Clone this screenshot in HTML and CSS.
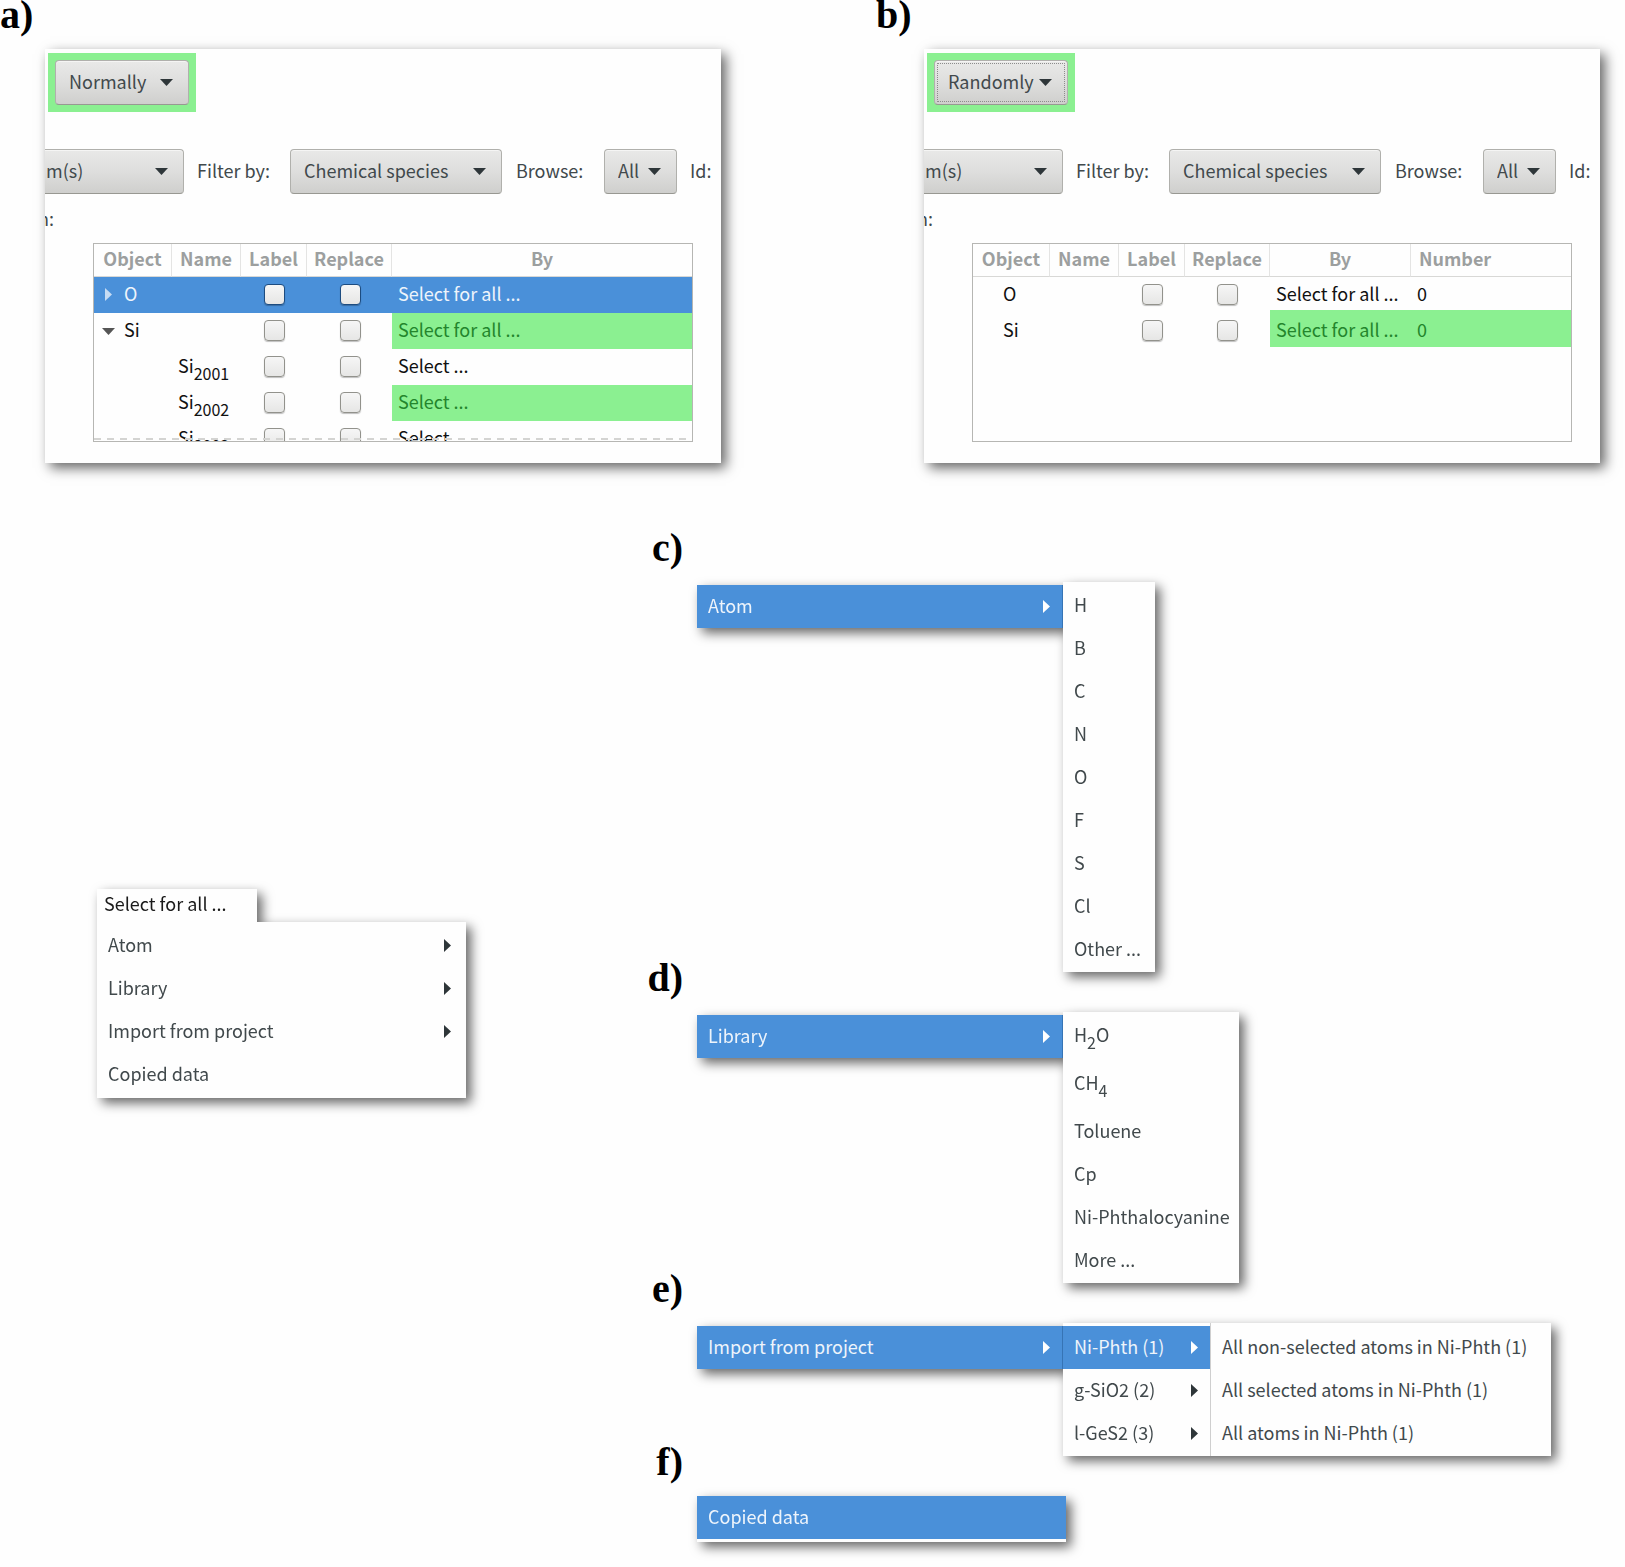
FILE: index.html
```html
<!DOCTYPE html>
<html lang="en">
<head>
<meta charset="utf-8">
<title>Replacement options</title>
<link rel="stylesheet" href="styles.css">
</head>
<body>
<svg class="defs" aria-hidden="true">
  <symbol id="down" viewBox="0 0 13 7"><path d="M0 0h13L6.500 7z" fill="currentColor"/></symbol>
  <symbol id="right" viewBox="0 0 7 13"><path d="M0 0v13L7 6.500z" fill="currentColor"/></symbol>
</svg>
<main>
  <div class="panels">
    <section class="figure">
      <h2>a)</h2>
      <div class="panel">
        <div class="highlight">
          <span class="combo mode"><select aria-label="Replacement mode"><option>Normally</option></select><svg class="down"><use href="#down"/></svg></span>
        </div>
        <div class="toolbar">
          <span class="combo cut"><select aria-label="Object type"><option>m(s)</option></select><svg class="down"><use href="#down"/></svg></span>
          <label class="filter" for="filter-a">Filter by:</label>
          <span class="combo species"><select id="filter-a"><option>Chemical species</option></select><svg class="down"><use href="#down"/></svg></span>
          <label class="browse" for="browse-a">Browse:</label>
          <span class="combo all"><select id="browse-a"><option>All</option></select><svg class="down"><use href="#down"/></svg></span>
          <span class="id">Id:</span>
        </div>
        <p class="caption">n:</p>
        <div class="tree more">
          <table>
            <colgroup><col class="c-object"><col class="c-name"><col class="c-label"><col class="c-replace"><col></colgroup>
            <thead><tr><th>Object</th><th>Name</th><th>Label</th><th>Replace</th><th>By</th></tr></thead>
            <tbody>
              <tr class="selected"><td class="node"><svg class="right"><use href="#right"/></svg>O</td><td></td><td class="tick"><input type="checkbox" aria-label="Label O"></td><td class="tick"><input type="checkbox" aria-label="Replace O"></td><td>Select for all ...</td></tr>
              <tr><td class="node open"><svg class="down"><use href="#down"/></svg>Si</td><td></td><td class="tick"><input type="checkbox" aria-label="Label Si"></td><td class="tick"><input type="checkbox" aria-label="Replace Si"></td><td class="green">Select for all ...</td></tr>
              <tr><td></td><td>Si<sub>2001</sub></td><td class="tick"><input type="checkbox" aria-label="Label Si 2001"></td><td class="tick"><input type="checkbox" aria-label="Replace Si 2001"></td><td>Select ...</td></tr>
              <tr><td></td><td>Si<sub>2002</sub></td><td class="tick"><input type="checkbox" aria-label="Label Si 2002"></td><td class="tick"><input type="checkbox" aria-label="Replace Si 2002"></td><td class="green">Select ...</td></tr>
              <tr><td></td><td>Si<sub>2003</sub></td><td class="tick"><input type="checkbox" aria-label="Label Si 2003"></td><td class="tick"><input type="checkbox" aria-label="Replace Si 2003"></td><td>Select ...</td></tr>
            </tbody>
          </table>
        </div>
      </div>
    </section>

    <section class="figure second">
      <h2>b)</h2>
      <div class="panel">
        <div class="highlight">
          <span class="combo mode focused"><select aria-label="Replacement mode"><option>Randomly</option></select><svg class="down"><use href="#down"/></svg></span>
        </div>
        <div class="toolbar">
          <span class="combo cut"><select aria-label="Object type"><option>m(s)</option></select><svg class="down"><use href="#down"/></svg></span>
          <label class="filter" for="filter-b">Filter by:</label>
          <span class="combo species"><select id="filter-b"><option>Chemical species</option></select><svg class="down"><use href="#down"/></svg></span>
          <label class="browse" for="browse-b">Browse:</label>
          <span class="combo all"><select id="browse-b"><option>All</option></select><svg class="down"><use href="#down"/></svg></span>
          <span class="id">Id:</span>
        </div>
        <p class="caption">n:</p>
        <div class="tree flat">
          <table>
            <colgroup><col class="c-object"><col class="c-name"><col class="c-label"><col class="c-replace"><col class="c-by"><col></colgroup>
            <thead><tr><th>Object</th><th>Name</th><th>Label</th><th>Replace</th><th>By</th><th class="number">Number</th></tr></thead>
            <tbody>
              <tr><td class="leaf">O</td><td></td><td class="tick"><input type="checkbox" aria-label="Label O"></td><td class="tick"><input type="checkbox" aria-label="Replace O"></td><td>Select for all ...</td><td>0</td></tr>
              <tr><td class="leaf">Si</td><td></td><td class="tick"><input type="checkbox" aria-label="Label Si"></td><td class="tick"><input type="checkbox" aria-label="Replace Si"></td><td class="green">Select for all ...</td><td class="green">0</td></tr>
            </tbody>
          </table>
        </div>
      </div>
    </section>
  </div>

  <div class="menus">
    <div class="popup">
      <p class="tab">Select for all ...</p>
      <div class="menu root">
        <button>Atom<svg class="right"><use href="#right"/></svg></button>
        <button>Library<svg class="right"><use href="#right"/></svg></button>
        <button>Import from project<svg class="right"><use href="#right"/></svg></button>
        <button>Copied data</button>
      </div>
    </div>

    <div class="steps">
      <section class="step">
        <h2>c)</h2>
        <div class="cascade">
          <div class="bar"><button class="active">Atom<svg class="right"><use href="#right"/></svg></button></div>
          <div class="menu atoms">
            <button>H</button><button>B</button><button>C</button><button>N</button><button>O</button><button>F</button><button>S</button><button>Cl</button><button>Other ...</button>
          </div>
        </div>
      </section>
      <section class="step">
        <h2>d)</h2>
        <div class="cascade">
          <div class="bar"><button class="active">Library<svg class="right"><use href="#right"/></svg></button></div>
          <div class="menu library">
            <button class="tall"><span>H<sub>2</sub>O</span></button><button class="tall"><span>CH<sub>4</sub></span></button><button>Toluene</button><button>Cp</button><button>Ni-Phthalocyanine</button><button>More ...</button>
          </div>
        </div>
      </section>
      <section class="step">
        <h2>e)</h2>
        <div class="cascade">
          <div class="bar"><button class="active">Import from project<svg class="right"><use href="#right"/></svg></button></div>
          <div class="menu projects">
            <button class="active">Ni-Phth (1)<svg class="right"><use href="#right"/></svg></button>
            <button>g-SiO2 (2)<svg class="right"><use href="#right"/></svg></button>
            <button>l-GeS2 (3)<svg class="right"><use href="#right"/></svg></button>
          </div>
          <div class="menu scope">
            <button>All non-selected atoms in Ni-Phth (1)</button>
            <button>All selected atoms in Ni-Phth (1)</button>
            <button>All atoms in Ni-Phth (1)</button>
          </div>
        </div>
      </section>
      <section class="step">
        <h2>f)</h2>
        <div class="cascade">
          <div class="bar last"><button class="active">Copied data</button></div>
        </div>
      </section>
    </div>
  </div>
</main>
</body>
</html>
```
FILE: styles.css
```css
* { box-sizing: border-box; }

body {
  margin: 0;
  background: #fefefe;
  color: #41494c;
  font: 18px/24px "Noto Sans CJK SC", "Open Sans", sans-serif;
}

.defs { display: none; }

h2 {
  margin: 0;
  color: #000;
  font: bold 40px/29px "Liberation Serif", serif;
}

p { margin: 0; }

svg { flex: none; fill: currentColor; }
svg.down { width: 13px; height: 7px; }
svg.right { width: 7px; height: 13px; }

/* Option panels */
.panels {
  display: grid;
  grid-template-columns: 876fr 749fr;
}

.panel {
  max-width: 676px;
  margin: 20px 0 0 45px;
  padding: 4px 0 21px;
  overflow: hidden;
  background: #fefefe;
  box-shadow: 5px 5px 12px rgba(0, 0, 0, 0.6);
}

.second .panel { margin-left: 48px; }

.highlight {
  width: fit-content;
  margin-left: 3px;
  padding: 7px;
  background: #8bf091;
}

.combo {
  position: relative;
  display: flex;
  flex: none;
}

.combo select {
  width: 100%;
  height: 45px;
  padding: 0 0 4px 13px;
  appearance: none;
  border: 1px solid #b0b0ac;
  border-bottom-color: #989892;
  border-radius: 4px;
  background: linear-gradient(#e9e9e8, #dededd 50%, #cfcfcd);
  box-shadow: inset 0 1px #f5f5f4;
  color: inherit;
  font: inherit;
}

.combo .down {
  position: absolute;
  right: 16px;
  top: 19px;
  color: #2e3639;
  pointer-events: none;
}

.mode { width: 134px; }
.focused select { outline: 1px dotted #8c8c8c; outline-offset: -4px; }
.cut { width: 145px; margin-left: -6px; }
.combo.cut select { padding-left: 6px; }
.species { width: 212px; }
.all { width: 73px; }

.toolbar {
  display: flex;
  align-items: center;
  margin-top: 37px;
  white-space: nowrap;
}

.filter { width: 106px; padding: 0 0 3px 13px; }
.browse { width: 102px; padding: 0 0 3px 14px; }
.id { padding: 0 0 3px 13px; }

.caption { margin: 12px 0 13px -7px; }

/* Object lists */
.tree {
  position: relative;
  height: 199px;
  margin: 0 28px 0 48px;
  overflow: hidden;
  border: 1px solid #b6b6b3;
}

.more::after {
  content: "";
  position: absolute;
  inset: auto 0 1px;
  height: 2px;
  background: repeating-linear-gradient(90deg, #d4d4d2 0 7px, transparent 7px 13px);
}

table {
  width: 100%;
  table-layout: fixed;
  border-collapse: separate;
  border-spacing: 0;
  color: #111;
  white-space: nowrap;
}

.c-object { width: 78px; }
.flat .c-object { width: 77px; }
.c-name { width: 69px; }
.c-label { width: 66px; }
.c-replace { width: 85px; }
.c-by { width: 141px; }

th {
  height: 33px;
  padding: 0 0 4px;
  border-right: 1px solid #e4e4e3;
  border-bottom: 1px solid #d8d8d6;
  color: #9c9f9f;
  font-weight: bold;
}

th:last-child { border-right: 0; }
.number { padding-left: 8px; text-align: left; }

td { height: 36px; padding: 0 0 4px 6px; }

.flat td { height: 33px; padding-bottom: 2px; }
.flat tr:last-child td { height: 37px; padding-bottom: 0; }
.flat td.tick { padding: 2px 0 0; }
.flat tr:last-child td.tick { padding-top: 4px; }

td.node { padding-left: 11px; }
.node svg { margin-right: 12px; color: #555; }
td.open { padding-left: 8px; }
.open svg { margin-right: 9px; vertical-align: 2px; }
.flat .leaf { padding-left: 30px; }

.selected { background: #4a90d9; color: #eef4fb; }
.selected svg { color: #c5dbf3; }
.green { background: #8bf091; color: #23852c; }

td.tick { padding: 0 0 2px 1px; }

.tick input {
  display: block;
  width: 21px;
  height: 21px;
  margin: 0 auto;
  appearance: none;
  border: 1px solid #92928c;
  border-radius: 4px;
  background: linear-gradient(#f6f6f6, #e6e6e5);
  box-shadow: 0 1px 1px rgba(0, 0, 0, 0.25);
}

.selected input { border-color: #1d4c80; }

sub { font-size: 16px; line-height: 0; vertical-align: -7px; }

/* Menus */
.menus {
  display: grid;
  grid-template-columns: 647fr 978fr;
  margin-top: 70px;
  padding-bottom: 24px;
}

.popup {
  width: 369px;
  margin: 356px 0 0 97px;
}

.popup, .cascade { filter: drop-shadow(5px 5px 6px rgba(0, 0, 0, 0.6)); }

.tab {
  width: 160px;
  height: 33px;
  padding: 2px 7px;
  background: #fefefe;
  color: #1a1a1a;
}

.menu { padding: 2px 0 1px; background: #fefefe; }

button {
  display: flex;
  align-items: center;
  justify-content: space-between;
  width: 100%;
  height: 43px;
  padding: 0 12px 4px 11px;
  border: 0;
  background: none;
  color: inherit;
  font: inherit;
  white-space: nowrap;
}

button .right { margin-top: 4px; color: #2e3639; }
.root { padding-bottom: 2px; }
.root button { padding-right: 15px; }

.active { background: #4a90d9; color: #eef4fb; }
.active .right { color: #fff; }
.tall { height: 48px; padding-bottom: 8px; }

.step { display: flex; flex-direction: column; align-items: flex-start; }
.step + .step { margin-top: -9px; }
.step h2 { width: 36px; text-align: right; }

.cascade { display: flex; align-items: flex-start; margin: 20px 0 0 50px; }
.bar { width: 366px; margin-top: 3px; }
.bar button { border-right: 1px solid #3674b5; }
.last { width: 369px; margin-top: 0; padding-bottom: 3px; background: #fefefe; }
.last button { border-right: 0; }
.atoms { width: 92px; }
.library { width: 176px; }
.projects, .scope { padding-top: 3px; }
.projects { width: 147px; }
.scope { width: 341px; border-left: 1px solid #cfcfcf; }
```
